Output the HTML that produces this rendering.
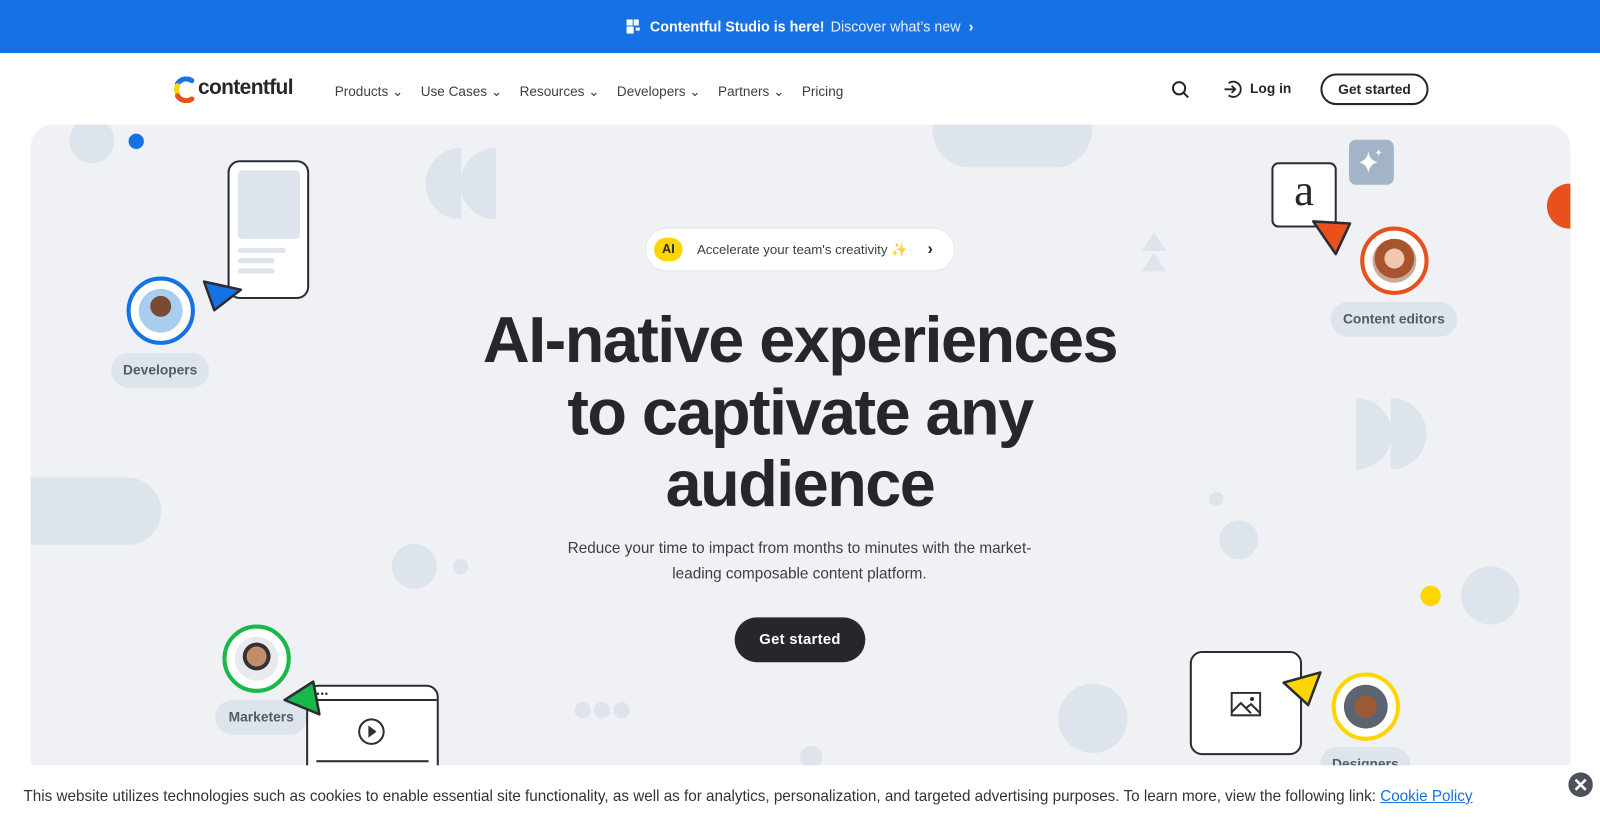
<!DOCTYPE html>
<html><head><meta charset="utf-8"><style>
*{margin:0;padding:0;box-sizing:border-box}
body{width:1600px;height:834px;overflow:hidden;background:#fff;font-family:"Liberation Sans",sans-serif;position:relative;color:#25272b}
#w{position:absolute;left:0;top:0;width:1568px;height:818px;transform:scale(1.02041);transform-origin:0 0}
.a{position:absolute}
.top{left:0;top:0;width:1568px;height:52px;background:#1672e4;color:#fff;font-size:14px;display:flex;align-items:center;justify-content:center}
.nav a{font-size:13.3px;color:#3b3f45;margin-right:17px;text-decoration:none}
.hero{left:30px;top:122px;width:1509px;height:660px;background:#eff1f5;border-radius:22px;overflow:hidden}
.c{position:absolute;border-radius:50%;background:#dde4ec}
.pill{position:absolute;background:#dde4ec;border-radius:18px;font-size:13.5px;font-weight:bold;color:#555b63;text-align:center;line-height:34px;height:34px}
.av{position:absolute;border-radius:50%;background:#fff}
.av i{position:absolute;left:8px;top:8px;right:8px;bottom:8px;border-radius:50%;display:block}
.card{position:absolute;background:#fff;border:2.5px solid #2a2d33;border-radius:12px}
</style></head><body><div id="w">
<div class="a top">
<svg width="14" height="14" viewBox="0 0 14 14" style="margin-right:9px"><rect x="0" y="0" width="6" height="6" fill="#fff"/><rect x="7" y="0" width="5" height="6" fill="#fff"/><rect x="0" y="7" width="7" height="7" fill="#fff"/><rect x="9" y="8" width="4" height="3" fill="#fff"/></svg>
<b style="margin-right:6px">Contentful Studio is here!</b><span style="opacity:.9">Discover what’s new</span><span style="margin-left:8px;font-weight:bold">›</span></div>

<svg class="a" style="left:170px;top:75px" width="24" height="26" viewBox="0 0 24 26"><path d="M18 4 A10 10 0 0 0 4 7" stroke="#1e73e8" stroke-width="5" fill="none" stroke-linecap="round"/><path d="M4 9 A10 10 0 0 0 4 17" stroke="#ffd500" stroke-width="5" fill="none" stroke-linecap="round"/><path d="M4 19 A10 10 0 0 0 18 22" stroke="#e8501c" stroke-width="5" fill="none" stroke-linecap="round"/></svg>
<div class="a" style="left:194px;top:74px;font-size:20.5px;font-weight:bold;color:#25272b;letter-spacing:-0.6px">contentful</div>
<div class="a nav" style="left:328px;top:81px">
<a>Products ⌄</a><a>Use Cases ⌄</a><a>Resources ⌄</a><a>Developers ⌄</a><a>Partners ⌄</a><a>Pricing</a></div>
<svg class="a" style="left:1148px;top:79px" width="18" height="18" viewBox="0 0 18 18"><circle cx="7.5" cy="7.5" r="6" stroke="#25272b" stroke-width="2" fill="none"/><path d="M12 12l4.5 4.5" stroke="#25272b" stroke-width="2"/></svg>
<svg class="a" style="left:1198px;top:78px" width="19" height="19" viewBox="0 0 19 19"><path d="M6 3.5A7.5 7.5 0 1 1 6 15.5" stroke="#25272b" stroke-width="1.8" fill="none"/><path d="M2 9.5h10M9 6l3.5 3.5L9 13" stroke="#25272b" stroke-width="1.8" fill="none"/></svg>
<div class="a" style="left:1225px;top:79px;font-size:13.5px;font-weight:bold">Log in</div>
<div class="a" style="left:1294px;top:72px;width:106px;height:31px;border:2px solid #25272b;border-radius:16px;font-size:13.5px;font-weight:bold;text-align:center;line-height:27px">Get started</div>

<div class="a hero">
<div class="c" style="left:38px;top:-6px;width:44px;height:44px"></div>
<div class="c" style="left:96px;top:9px;width:15px;height:15px;background:#1672e4"></div>
<div class="c" style="left:387px;top:23px;width:70px;height:70px;clip-path:inset(0 50% 0 0)"></div>
<div class="c" style="left:421px;top:23px;width:70px;height:70px;clip-path:inset(0 50% 0 0)"></div>
<div class="a" style="left:884px;top:-30px;width:156px;height:72px;border-radius:36px;background:#dde4ec"></div>
<div class="a" style="left:-40px;top:346px;width:168px;height:66px;border-radius:33px;background:#dde4ec"></div>
<div class="c" style="left:354px;top:411px;width:44px;height:44px"></div>
<div class="c" style="left:414px;top:426px;width:15px;height:15px"></div>
<div class="c" style="left:533px;top:566px;width:16px;height:16px"></div>
<div class="c" style="left:552px;top:566px;width:16px;height:16px"></div>
<div class="c" style="left:571px;top:566px;width:16px;height:16px"></div>
<div class="c" style="left:754px;top:609px;width:22px;height:22px"></div>
<div class="c" style="left:1007px;top:548px;width:68px;height:68px"></div>
<div class="c" style="left:1155px;top:360px;width:14px;height:14px"></div>
<div class="c" style="left:1165px;top:388px;width:38px;height:38px"></div>
<div class="c" style="left:1362px;top:452px;width:20px;height:20px;background:#ffd500"></div>
<div class="c" style="left:1402px;top:433px;width:57px;height:57px"></div>
<div class="c" style="left:1264px;top:268px;width:70px;height:70px;clip-path:inset(0 0 0 50%)"></div>
<div class="c" style="left:1298px;top:268px;width:70px;height:70px;clip-path:inset(0 0 0 50%)"></div>
<div class="c" style="left:1486px;top:58px;width:44px;height:44px;background:#e8501c"></div>
<svg class="a" style="left:1089px;top:106px" width="24" height="40"><path d="M12 0L24 18H0z M12 20L24 38H0z" fill="#dde4ec"/></svg>

<div class="card" style="left:193px;top:35px;width:80px;height:136px"><div style="position:absolute;left:8px;top:8px;width:61px;height:67px;background:#dde4ec;border-radius:4px"></div><div style="position:absolute;left:8px;top:84px;width:47px;height:5px;background:#dde4ec;border-radius:3px"></div><div style="position:absolute;left:8px;top:94px;width:36px;height:5px;background:#dde4ec;border-radius:3px"></div><div style="position:absolute;left:8px;top:104px;width:36px;height:5px;background:#dde4ec;border-radius:3px"></div></div>
<svg class="a" style="left:168px;top:150px" width="42" height="36"><path d="M2 4L38 12 12 32z" fill="#1672e4" stroke="#2a2d33" stroke-width="2.5" stroke-linejoin="round"/></svg>
<div class="av" style="left:94px;top:149px;width:67px;height:67px;border:4px solid #1672e4"><i style="background:radial-gradient(circle at 50% 40%,#7a4a32 0 30%,#a9cdef 31%)"></i></div>
<div class="pill" style="left:79px;top:224px;width:96px">Developers</div>

<div class="card" style="left:1216px;top:37px;width:64px;height:64px;border-radius:7px;font-family:'Liberation Serif',serif;font-size:44px;text-align:center;line-height:52px;font-weight:normal">a</div>
<div class="a" style="left:1292px;top:15px;width:44px;height:44px;background:#a3b4c6;border-radius:7px"><svg width="44" height="44"><path d="M19 11Q20 20 28 22Q20 24 19 33Q18 24 10 22Q18 20 19 11z" fill="#fff"/><path d="M29 9Q29.5 12 32 12.5Q29.5 13 29 16Q28.5 13 26 12.5Q28.5 12 29 9z" fill="#fff"/></svg></div>
<svg class="a" style="left:1255px;top:93px" width="42" height="38"><path d="M38 4L2 2 24 34z" fill="#e8501c" stroke="#2a2d33" stroke-width="2.5" stroke-linejoin="round"/></svg>
<div class="av" style="left:1303px;top:100px;width:67px;height:67px;border:4px solid #e8501c"><i style="background:radial-gradient(circle at 50% 45%,#f0c8b0 0 30%,#a8552f 31% 60%,#c9a99a 61%)"></i></div>
<div class="pill" style="left:1274px;top:174px;width:124px">Content editors</div>

<div class="av" style="left:188px;top:490px;width:67px;height:67px;border:4px solid #19b84a"><i style="background:radial-gradient(circle at 50% 45%,#c28d6b 0 30%,#333 31% 42%,#e8eaee 43%)"></i></div>
<div class="pill" style="left:181px;top:564px;width:90px">Marketers</div>
<div class="card" style="left:270px;top:549px;width:130px;height:140px"><div style="position:absolute;left:0;top:12px;width:100%;border-top:2.5px solid #2a2d33"></div><div style="position:absolute;left:8px;top:3px;font-size:9px;letter-spacing:1px;line-height:8px">•••</div>
<svg style="position:absolute;left:48px;top:30px" width="28" height="28"><circle cx="14" cy="14" r="12" stroke="#2a2d33" stroke-width="2" fill="none"/><path d="M11 8L19 14 11 20z" fill="#2a2d33"/></svg>
<div style="position:absolute;left:8px;top:72px;width:110px;border-top:2.5px solid #2a2d33"></div></div>
<svg class="a" style="left:245px;top:544px" width="42" height="40"><path d="M32 2L4 20 38 34z" fill="#19b84a" stroke="#2a2d33" stroke-width="2.5" stroke-linejoin="round"/></svg>

<div class="card" style="left:1136px;top:516px;width:110px;height:102px"><svg style="position:absolute;left:38px;top:38px" width="30" height="25"><rect x="1" y="1" width="28" height="22" stroke="#2a2d33" stroke-width="2" fill="none"/><path d="M1 20L10 11 20 21M15 16L20 12 29 21" stroke="#2a2d33" stroke-width="2" fill="none"/><circle cx="21" cy="7" r="2" fill="#2a2d33"/></svg></div>
<svg class="a" style="left:1226px;top:535px" width="42" height="40"><path d="M38 2L2 12 26 34z" fill="#ffd500" stroke="#2a2d33" stroke-width="2.5" stroke-linejoin="round"/></svg>
<div class="av" style="left:1275px;top:537px;width:67px;height:67px;border:4px solid #ffd500"><i style="background:radial-gradient(circle at 50% 50%,#9a5a36 0 35%,#5d6470 36%)"></i></div>
<div class="pill" style="left:1264px;top:610px;width:88px">Designers</div>

<div class="a" style="left:602px;top:101px;width:304px;height:43px;background:#fff;border:1px solid #e2e6ec;border-radius:22px;font-size:13px;color:#3b3f45;line-height:41px">
<span style="position:absolute;left:8px;top:9px;width:28px;height:23px;background:#ffd500;border-radius:12px;font-weight:bold;color:#25272b;text-align:center;line-height:23px;font-size:12.5px">AI</span>
<span style="position:absolute;left:50px">Accelerate your team's creativity <span style="color:#ffd500">✨</span></span>
<span style="position:absolute;left:276px;font-weight:bold;font-size:16px;color:#25272b">›</span></div>
<div class="a" style="left:270px;top:177px;width:968px;text-align:center;font-size:63.5px;font-weight:bold;line-height:70.5px;letter-spacing:-1.5px;color:#25272b">AI-native experiences<br>to captivate any<br>audience</div>
<div class="a" style="left:510px;top:404px;width:487px;text-align:center;font-size:15px;line-height:24.5px;color:#3b3f45">Reduce your time to impact from months to minutes with the market-leading composable content platform.</div>
<div class="a" style="left:690px;top:483px;width:128px;height:44px;background:#25272b;border-radius:22px;color:#fff;font-size:14.5px;font-weight:bold;text-align:center;line-height:44px;letter-spacing:.3px">Get started</div>
</div>

<div class="a" style="left:0;top:750px;width:1568px;height:68px;background:#fff"></div>
<div class="a" style="left:23px;top:772px;font-size:14.95px;color:#333;white-space:nowrap">This website utilizes technologies such as cookies to enable essential site functionality, as well as for analytics, personalization, and targeted advertising purposes. To learn more, view the following link: <span style="color:#1672e4;text-decoration:underline">Cookie Policy</span></div>
<svg class="a" style="left:1537px;top:757px" width="24" height="24"><circle cx="12" cy="12" r="12" fill="#4c525b"/><path d="M7 7L17 17M17 7L7 17" stroke="#fff" stroke-width="2.5"/></svg>
</div></body></html>
